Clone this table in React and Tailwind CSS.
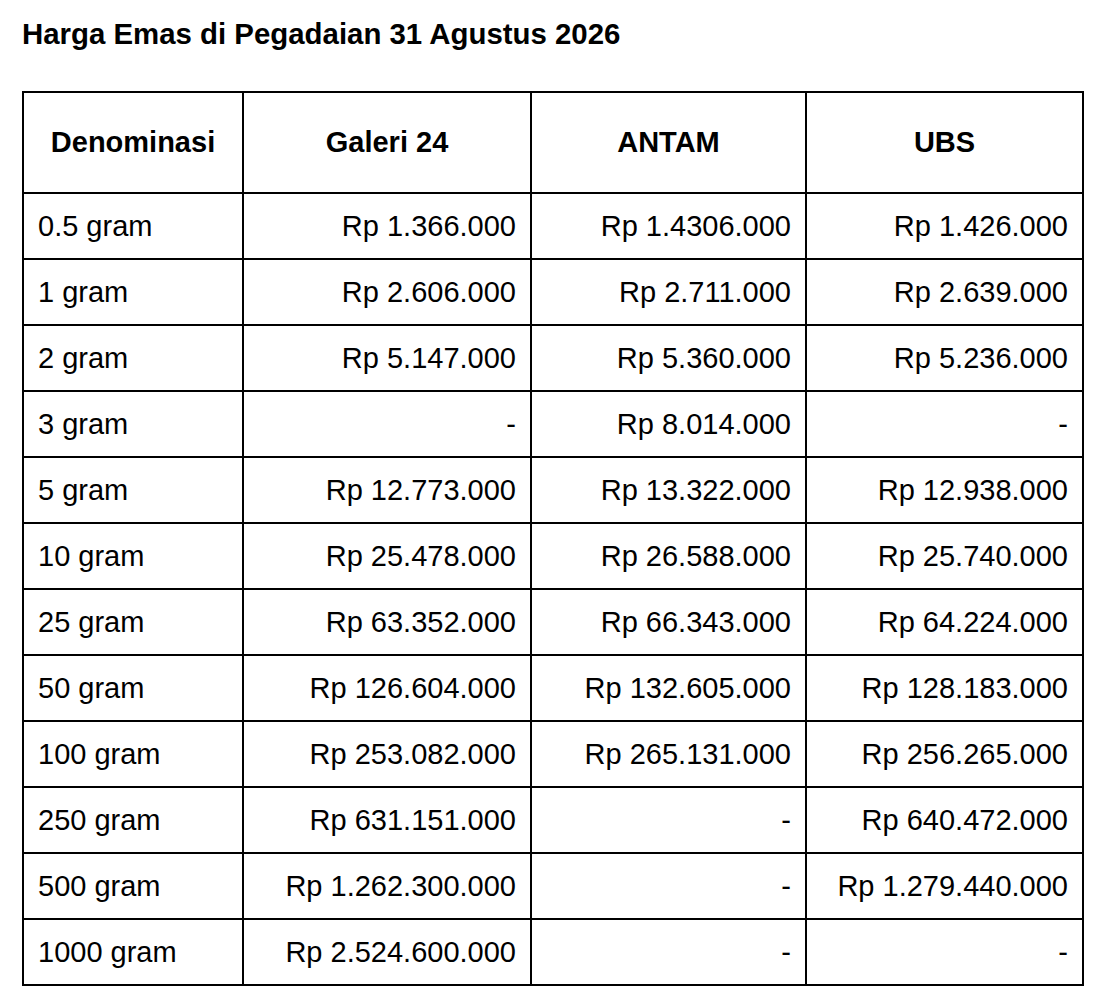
import React from "react";

const rows = [
  ["0.5 gram", "Rp 1.366.000", "Rp 1.4306.000", "Rp 1.426.000"],
  ["1 gram", "Rp 2.606.000", "Rp 2.711.000", "Rp 2.639.000"],
  ["2 gram", "Rp 5.147.000", "Rp 5.360.000", "Rp 5.236.000"],
  ["3 gram", "-", "Rp 8.014.000", "-"],
  ["5 gram", "Rp 12.773.000", "Rp 13.322.000", "Rp 12.938.000"],
  ["10 gram", "Rp 25.478.000", "Rp 26.588.000", "Rp 25.740.000"],
  ["25 gram", "Rp 63.352.000", "Rp 66.343.000", "Rp 64.224.000"],
  ["50 gram", "Rp 126.604.000", "Rp 132.605.000", "Rp 128.183.000"],
  ["100 gram", "Rp 253.082.000", "Rp 265.131.000", "Rp 256.265.000"],
  ["250 gram", "Rp 631.151.000", "-", "Rp 640.472.000"],
  ["500 gram", "Rp 1.262.300.000", "-", "Rp 1.279.440.000"],
  ["1000 gram", "Rp 2.524.600.000", "-", "-"],
];

export default function App() {
  return (
    <div
      className="bg-white text-black pl-[22px] pt-[17px] pb-4 min-h-[1004px]"
      style={{ fontFamily: '"Liberation Sans", Arial, sans-serif' }}
    >
      <h1 className="text-[29.4px] font-bold leading-[33px]">
        Harga Emas di Pegadaian 31 Agustus 2026
      </h1>
      <table className="mt-[41px] w-[1062px] table-fixed border-collapse border-2 border-black text-[29px]">
        <colgroup>
          <col className="w-[220px]" />
          <col className="w-[288px]" />
          <col className="w-[275px]" />
          <col className="w-[277px]" />
        </colgroup>
        <thead>
          <tr className="h-[101px]">
            {["Denominasi", "Galeri 24", "ANTAM", "UBS"].map((h) => (
              <th
                key={h}
                className="border-2 border-black px-[14px] text-center font-bold"
              >
                {h}
              </th>
            ))}
          </tr>
        </thead>
        <tbody>
          {rows.map((r) => (
            <tr key={r[0]} className="h-[66px]">
              <td className="border-2 border-black px-[14px] pt-[2px] text-left">{r[0]}</td>
              <td className="border-2 border-black px-[14px] pt-[2px] text-right">{r[1]}</td>
              <td className="border-2 border-black px-[14px] pt-[2px] text-right">{r[2]}</td>
              <td className="border-2 border-black px-[14px] pt-[2px] text-right">{r[3]}</td>
            </tr>
          ))}
        </tbody>
      </table>
    </div>
  );
}
